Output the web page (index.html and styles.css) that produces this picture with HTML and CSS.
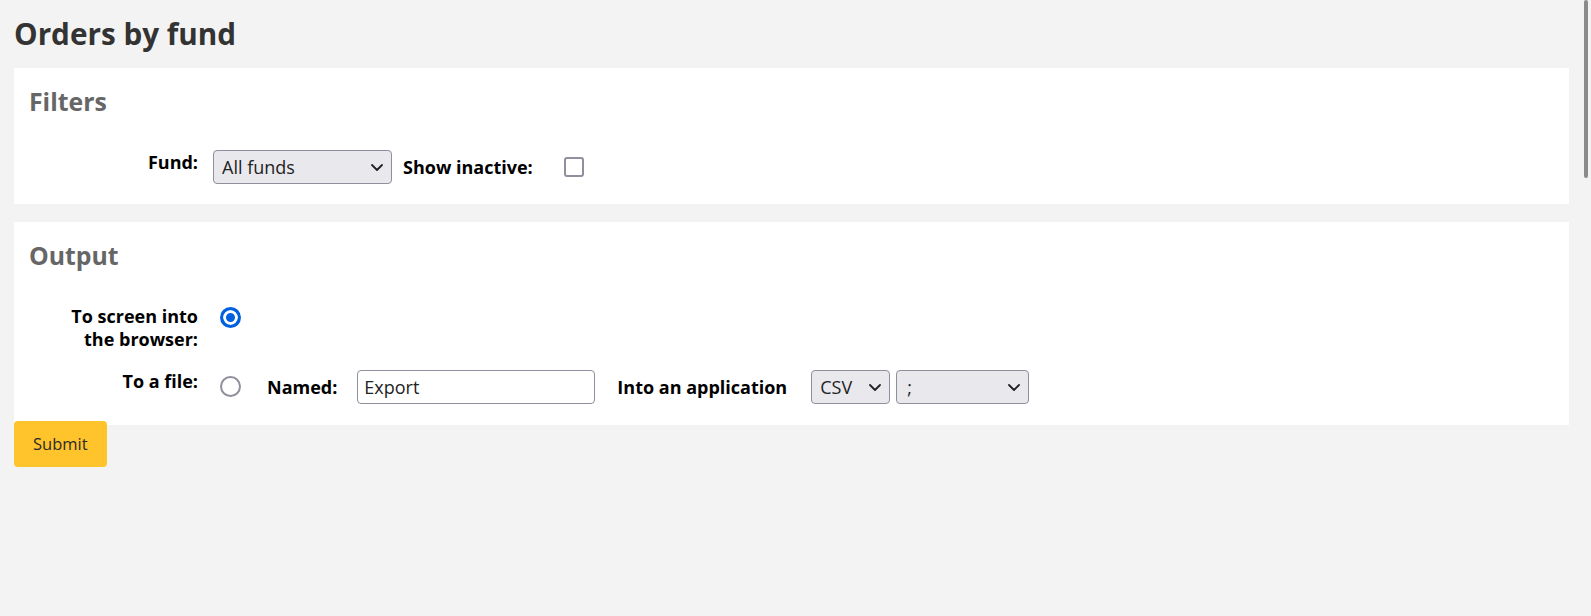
FILE: index.html
```html
<!DOCTYPE html>
<html lang="en">
<head>
<meta charset="utf-8">
<title>Orders by fund</title>
<link rel="stylesheet" href="styles.css">
</head>
<body>
<main class="page">
  <h1 class="page-title">Orders by fund</h1>
  <form class="report-form">
    <section class="panel">
      <h2 class="panel-title">Filters</h2>
      <ol class="rows">
        <li class="row">
          <label class="row-label" for="fund">Fund:</label>
          <div class="row-fields">
            <span class="select-wrap select-fund">
              <select id="fund" class="select"><option>All funds</option></select>
              <svg class="chevron" viewBox="0 0 12 7" width="12" height="7"><path d="M1 1 L6 6 L11 1" fill="none" stroke="#222" stroke-width="1.8" stroke-linecap="round" stroke-linejoin="round"/></svg>
            </span>
            <label class="inline-label label-inactive" for="inactive">Show inactive:</label>
            <input type="checkbox" id="inactive" class="checkbox">
          </div>
        </li>
      </ol>
    </section>
    <section class="panel">
      <h2 class="panel-title">Output</h2>
      <ol class="rows">
        <li class="row">
          <label class="row-label" for="out-screen">To screen into the browser:</label>
          <div class="row-fields row-fields-top">
            <input type="radio" id="out-screen" name="output" class="radio" checked>
          </div>
        </li>
        <li class="row">
          <label class="row-label" for="out-file">To a file:</label>
          <div class="row-fields">
            <input type="radio" id="out-file" name="output" class="radio">
            <label class="inline-label label-named" for="basename">Named:</label>
            <input type="text" id="basename" class="text-input" value="Export">
            <label class="inline-label label-app" for="mime">Into an application</label>
            <span class="select-wrap select-csv">
              <select id="mime" class="select"><option>CSV</option></select>
              <svg class="chevron" viewBox="0 0 12 7" width="12" height="7"><path d="M1 1 L6 6 L11 1" fill="none" stroke="#222" stroke-width="1.8" stroke-linecap="round" stroke-linejoin="round"/></svg>
            </span>
            <span class="select-wrap select-sep">
              <select id="sep" class="select"><option>;</option></select>
              <svg class="chevron" viewBox="0 0 12 7" width="12" height="7"><path d="M1 1 L6 6 L11 1" fill="none" stroke="#222" stroke-width="1.8" stroke-linecap="round" stroke-linejoin="round"/></svg>
            </span>
          </div>
        </li>
      </ol>
    </section>
    <button type="submit" class="submit">Submit</button>
  </form>
</main>
<div class="scroll-thumb"></div>
</body>
</html>
```

FILE: styles.css
```css
html, body {
  margin: 0;
  padding: 0;
}

body {
  background: #f3f3f3;
  font-family: "Open Sans", "Noto Sans", sans-serif;
  font-size: 18px;
  color: #000;
}

.page {
  padding: 0 22px 0 14px;
}

.page-title {
  margin: 16px 0 16px;
  font-size: 29.7px;
  line-height: 36px;
  font-weight: 700;
  color: #333;
}

.report-form {
  display: flex;
  flex-direction: column;
  align-items: flex-start;
}

.panel {
  align-self: stretch;
  background: #fff;
  padding: 18px 15px 20px;
  margin-bottom: 18px;
}

.panel + .panel {
  margin-bottom: 0;
  padding-bottom: 21px;
}

.panel-title {
  margin: 0 0 34px;
  font-size: 24.8px;
  line-height: 30px;
  font-weight: 700;
  color: #666;
}

.rows {
  list-style: none;
  margin: 0 0 0 19px;
  padding: 0;
  display: grid;
  grid-template-columns: 150px 1fr;
  column-gap: 15px;
  row-gap: 18px;
}

.row {
  display: contents;
}

.row-label {
  text-align: right;
  font-weight: 700;
  line-height: 23.5px;
  padding-top: 0.5px;
}

.row-fields {
  display: flex;
  align-items: center;
}

.row-fields-top {
  align-items: flex-start;
}

.inline-label {
  font-weight: 700;
  line-height: 34px;
}

.label-inactive { margin-left: 11px; }
.label-named { margin-left: 26px; }
.label-app { margin-left: 22px; }

.select-wrap {
  position: relative;
  display: inline-block;
  height: 34px;
}

.select {
  appearance: none;
  -webkit-appearance: none;
  box-sizing: border-box;
  width: 100%;
  height: 34px;
  margin: 0;
  padding: 0 0 0 8px;
  border: 1px solid #8f8f9d;
  border-radius: 4px;
  background: #e9e9ed;
  font-family: inherit;
  font-size: 18px;
  color: #222;
}

.chevron {
  position: absolute;
  right: 9px;
  top: 14px;
  pointer-events: none;
}

.select-fund { width: 179px; }
.select-csv { width: 79px; margin-left: 24px; }
.select-sep { width: 133px; margin-left: 6px; }
.select-sep .select { padding-left: 10px; }

.checkbox {
  appearance: none;
  -webkit-appearance: none;
  box-sizing: border-box;
  width: 20px;
  height: 20px;
  margin: 0 0 0 31px;
  border: 2px solid #8f8f9d;
  border-radius: 3px;
  background: #fff;
}

.radio {
  appearance: none;
  -webkit-appearance: none;
  box-sizing: border-box;
  width: 21px;
  height: 21px;
  margin: 0 0 0 7px;
  border: 2px solid #8f8f9d;
  border-radius: 50%;
  background: #fff;
}

.row-fields-top .radio {
  margin-top: 3px;
}

.radio:checked {
  border: 3px solid #0060df;
  background: #0060df;
  box-shadow: inset 0 0 0 3px #fff;
}

.text-input {
  box-sizing: border-box;
  width: 238px;
  height: 34px;
  margin: 0 0 0 20px;
  padding: 0 0 0 6px;
  border: 1px solid #8f8f9d;
  border-radius: 4px;
  background: #fff;
  font-family: inherit;
  font-size: 18px;
  color: #222;
}

.submit {
  margin-top: -4px;
  padding: 11px 19px;
  border: 0;
  border-radius: 4px;
  background: #ffc32b;
  font-family: inherit;
  font-size: 16.5px;
  line-height: 24px;
  color: #2b2b2b;
}

.scroll-thumb {
  position: fixed;
  top: 0;
  right: 3px;
  width: 4px;
  height: 178px;
  border-radius: 2px;
  background: #8b8b8b;
}
```
